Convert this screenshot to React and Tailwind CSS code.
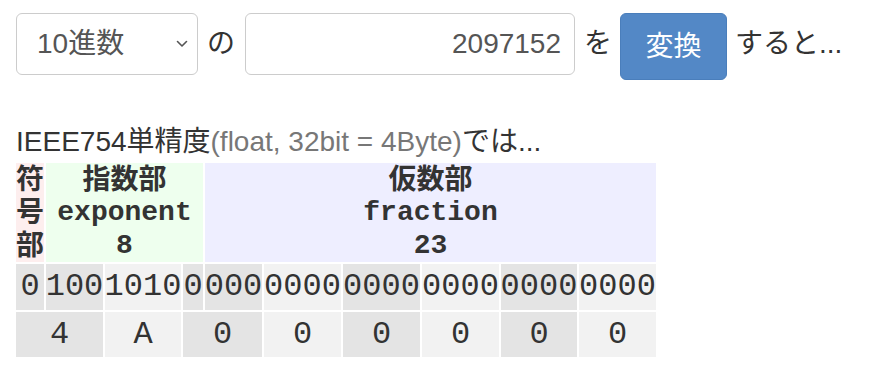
const sans = { fontFamily: '"Liberation Sans", "Noto Sans CJK JP", sans-serif' };

const bits = [
  { t: "0", dark: true },
  { t: "100", dark: true },
  { t: "1010", dark: false },
  { t: "0", dark: true },
  { t: "000", dark: true },
  { t: "0000", dark: false },
  { t: "0000", dark: true },
  { t: "0000", dark: false },
  { t: "0000", dark: true },
  { t: "0000", dark: false },
];

const hex = [
  { t: "4", span: 2, dark: true },
  { t: "A", span: 1, dark: false },
  { t: "0", span: 2, dark: true },
  { t: "0", span: 1, dark: false },
  { t: "0", span: 1, dark: true },
  { t: "0", span: 1, dark: false },
  { t: "0", span: 1, dark: true },
  { t: "0", span: 1, dark: false },
];

const spanClass = { 1: "col-span-1", 2: "col-span-2" };

function Chevron() {
  return (
    <svg width="12" height="8" viewBox="0 0 12 8" fill="none">
      <path d="M1.5 1.5 L6 6 L10.5 1.5" stroke="#555" strokeWidth="1.6" strokeLinecap="round" strokeLinejoin="round" />
    </svg>
  );
}

export default function App() {
  return (
    <div className="min-h-screen bg-white pt-[13px] pl-4 text-[28px] text-[#333]" style={sans}>
      {/* input row */}
      <div className="flex items-start">
        <div className="flex h-[62px] w-[182px] items-center justify-between rounded-[6px] border border-[#ccc] bg-white pl-[20px] pr-[9px] text-[#555] leading-none">
          <span>10進数</span>
          <Chevron />
        </div>
        <span className="ml-[9px] flex h-[62px] items-center">の</span>
        <div className="ml-[10px] flex h-[62px] w-[330px] items-center justify-end rounded-[6px] border border-[#ccc] bg-white pr-[13px] text-[#555] leading-none">
          2097152
        </div>
        <span className="ml-[9px] flex h-[62px] items-center">を</span>
        <button className="ml-[8px] flex h-[67px] w-[107px] items-center justify-center rounded-[6px] border border-[#4a7ebb] bg-[#5388c6] text-white leading-none">
          変換
        </button>
        <span className="ml-[8px] flex h-[62px] items-center">すると...</span>
      </div>

      <p className="mt-[46px] leading-[32px]">
        IEEE754単精度<span className="text-[#777]">(float, 32bit = 4Byte)</span>では...
      </p>

      {/* bit table */}
      <div className="mt-[5px] grid w-max grid-cols-[28px_57px_76px_20px_57px_77px_77px_77px_76px_77px] gap-[2px]">
        <div className="bg-[#fdeeee] text-center text-[28px] font-bold leading-[33px]">符号部</div>
        <div className="col-span-3 bg-[#eeffee] text-center text-[28px] font-bold leading-[33px]">
          <div>指数部</div>
          <div style={{ fontFamily: '"Liberation Mono", monospace' }}>exponent</div>
          <div style={{ fontFamily: '"Liberation Mono", monospace' }}>8</div>
        </div>
        <div className="col-span-6 bg-[#eeeeff] text-center text-[28px] font-bold leading-[33px]">
          <div>仮数部</div>
          <div style={{ fontFamily: '"Liberation Mono", monospace' }}>fraction</div>
          <div style={{ fontFamily: '"Liberation Mono", monospace' }}>23</div>
        </div>

        {bits.map((b, i) => (
          <div
            key={"b" + i}
            className={`flex h-[46px] items-center justify-center text-[32px] leading-none ${
              b.dark ? "bg-[#e4e4e4]" : "bg-[#f2f2f2]"
            }`}
            style={{ fontFamily: '"Liberation Mono", monospace' }}
          >
            {b.t}
          </div>
        ))}

        {hex.map((h, i) => (
          <div
            key={"h" + i}
            className={`flex h-[45px] items-center justify-center text-[32px] leading-none ${spanClass[h.span]} ${
              h.dark ? "bg-[#e4e4e4]" : "bg-[#f2f2f2]"
            }`}
            style={{ fontFamily: '"Liberation Mono", monospace' }}
          >
            {h.t}
          </div>
        ))}
      </div>
    </div>
  );
}
